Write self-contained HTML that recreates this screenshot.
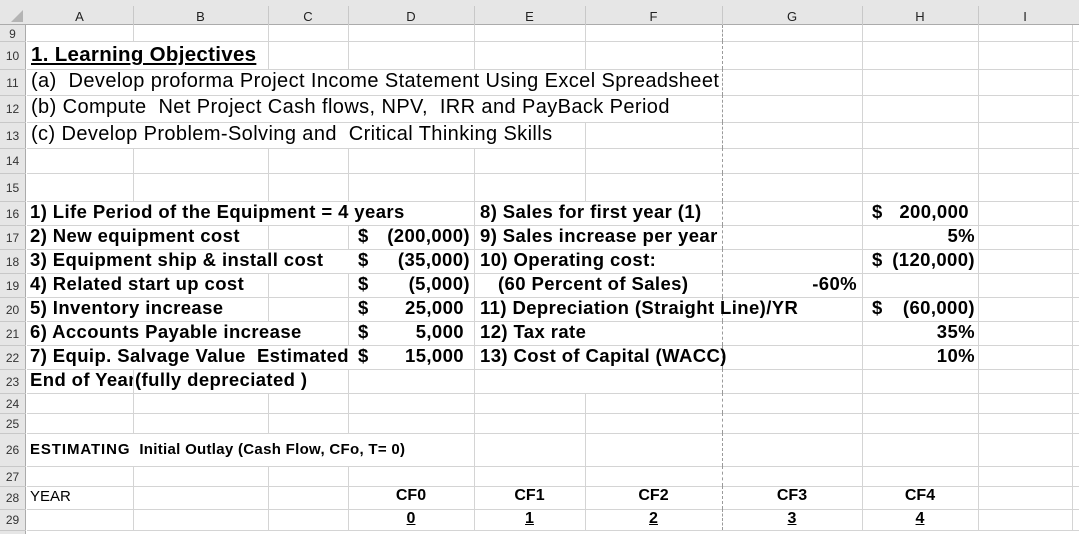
<!DOCTYPE html>
<html><head><meta charset="utf-8"><style>
*{margin:0;padding:0;box-sizing:border-box}
body{width:1079px;height:534px;overflow:hidden;background:#fff;font-family:"Liberation Sans",Arial,sans-serif;position:relative;color:#000}
.a{position:absolute;white-space:nowrap}
.h{background:#d4d4d4;position:absolute;height:1px}
.v{background:#d4d4d4;position:absolute;width:1px}
.dash{position:absolute;width:1px;border-left:1px dashed #9a9a9a}
.ch{position:absolute;top:8px;font-size:13px;color:#222;text-align:center;height:17px;line-height:17px}
.rn{position:absolute;left:0;width:25px;font-size:12px;color:#333;text-align:center}
.b{font-weight:bold}
.t19{font-size:20px;letter-spacing:0.4px}
.t17{font-size:18.5px;font-weight:bold;letter-spacing:0.4px;top:0}
</style></head><body>
<div style="position:absolute;left:0;top:0;width:1079px;height:25px;background:#e6e6e6;border-bottom:1px solid #ababab"></div>
<div style="position:absolute;left:0;top:25px;width:26px;height:509px;background:#e6e6e6;border-right:1px solid #ababab"></div>
<svg class="a" style="left:10px;top:9px" width="14" height="14"><polygon points="13,1 13,13 1,13" fill="#b4b4b4"/></svg>
<div id="g"></div>
<script>
var cols=[26,133,268,348,474,585,722,862,978,1072];
var rows=[25,41,69,95,122,148,173,201,225,249,273,297,321,345,369,393,413,433,466,486,509,530];
var names=["9","10","11","12","13","14","15","16","17","18","19","20","21","22","23","24","25","26","27","28","29"];
var omit={"10":[133],"11":[133,268,348,474,585],"12":[133,268,348,474,585],"13":[133,268,348,474],"16":[133,268,348,585],"17":[133,585],"18":[133,268,348,585],"19":[133,585],"20":[133,585],"21":[133,268,585],"22":[133,268,348,585],"23":[268,585],"26":[133,268,348]};
var h="";
var L=["A","B","C","D","E","F","G","H","I"];
for(var i=0;i<L.length;i++){h+='<div class="ch" style="left:'+cols[i]+'px;width:'+(cols[i+1]-cols[i])+'px">'+L[i]+'</div>';
if(i>0)h+='<div style="position:absolute;left:'+cols[i]+'px;top:6px;width:1px;height:19px;background:#c8c8c8"></div>';}
for(var r=0;r<names.length;r++){
var y0=rows[r],y1=rows[r+1];
h+='<div class="rn" style="top:'+y0+'px;height:'+(y1-y0)+'px;line-height:'+(y1-y0+2)+'px">'+names[r]+'</div>';
h+='<div class="h" style="left:27px;width:1052px;top:'+y1+'px"></div>';
h+='<div class="h" style="left:0;width:26px;top:'+y1+'px;background:#c8c8c8"></div>';
var om=omit[names[r]]||[];
for(var c=1;c<cols.length;c++){var x=cols[c];if(x==722){h+='<div class="dash" style="left:'+x+'px;top:'+y0+'px;height:'+(y1-y0)+'px"></div>';continue;}
if(om.indexOf(x)>=0)continue;
h+='<div class="v" style="left:'+x+'px;top:'+y0+'px;height:'+(y1-y0)+'px"></div>';}
}
document.getElementById("g").innerHTML=h;
</script>
<div class="a b" style="left:31px;top:43px;font-size:20.5px;letter-spacing:0.3px;text-decoration:underline">1. Learning Objectives</div>
<div class="a t19" style="left:31px;top:70px">(a)&nbsp; Develop proforma Project Income Statement Using Excel Spreadsheet</div>
<div class="a t19" style="left:31px;top:96px">(b) Compute&nbsp; Net Project Cash flows, NPV,&nbsp; IRR and PayBack Period</div>
<div class="a t19" style="left:31px;top:123px">(c) Develop Problem-Solving and&nbsp; Critical Thinking Skills</div>

<div class="a t17" style="left:30px;top:201px">1) Life Period of the Equipment = 4 years</div>
<div class="a t17" style="left:30px;top:225px">2) New equipment cost</div>
<div class="a t17" style="left:30px;top:249px">3) Equipment ship &amp; install cost</div>
<div class="a t17" style="left:30px;top:273px">4) Related start up cost</div>
<div class="a t17" style="left:30px;top:297px">5) Inventory increase</div>
<div class="a t17" style="left:30px;top:321px">6) Accounts Payable increase</div>
<div class="a t17" style="left:30px;top:345px">7) Equip. Salvage Value&nbsp; Estimated</div>
<div class="a t17" style="left:30px;top:369px;width:103px;overflow:hidden">End of Year</div>
<div class="a t17" style="left:135px;top:369px">(fully depreciated )</div>

<div class="a t17" style="left:358px;top:225px">$</div>
<div class="a t17" style="left:358px;top:249px">$</div>
<div class="a t17" style="left:358px;top:273px">$</div>
<div class="a t17" style="left:358px;top:297px">$</div>
<div class="a t17" style="left:358px;top:321px">$</div>
<div class="a t17" style="left:358px;top:345px">$</div>
<div class="a t17" style="right:609px;top:225px">(200,000)</div>
<div class="a t17" style="right:609px;top:249px">(35,000)</div>
<div class="a t17" style="right:609px;top:273px">(5,000)</div>
<div class="a t17" style="right:615px;top:297px">25,000</div>
<div class="a t17" style="right:615px;top:321px">5,000</div>
<div class="a t17" style="right:615px;top:345px">15,000</div>

<div class="a t17" style="left:480px;top:201px">8) Sales for first year (1)</div>
<div class="a t17" style="left:480px;top:225px">9) Sales increase per year</div>
<div class="a t17" style="left:480px;top:249px">10) Operating cost:</div>
<div class="a t17" style="left:498px;top:273px">(60 Percent of Sales)</div>
<div class="a t17" style="left:480px;top:297px">11) Depreciation (Straight Line)/YR</div>
<div class="a t17" style="left:480px;top:321px">12) Tax rate</div>
<div class="a t17" style="left:480px;top:345px">13) Cost of Capital (WACC)</div>
<div class="a t17" style="right:222px;top:273px">-60%</div>

<div class="a t17" style="left:872px;top:201px">$</div>
<div class="a t17" style="left:872px;top:249px">$</div>
<div class="a t17" style="left:872px;top:297px">$</div>
<div class="a t17" style="right:110px;top:201px">200,000</div>
<div class="a t17" style="right:104px;top:225px">5%</div>
<div class="a t17" style="right:104px;top:249px">(120,000)</div>
<div class="a t17" style="right:104px;top:297px">(60,000)</div>
<div class="a t17" style="right:104px;top:321px">35%</div>
<div class="a t17" style="right:104px;top:345px">10%</div>

<div class="a b" style="left:30px;top:441px;font-size:15px;letter-spacing:0.3px"><span style="letter-spacing:0.9px">ESTIMATING</span>&nbsp; Initial Outlay (Cash Flow, CFo, T= 0)</div>
<div class="a" style="left:30px;top:488px;font-size:15px">YEAR</div>
<div class="a b" style="left:348px;width:126px;text-align:center;top:487px;font-size:16px">CF0</div>
<div class="a b" style="left:474px;width:111px;text-align:center;top:487px;font-size:16px">CF1</div>
<div class="a b" style="left:585px;width:137px;text-align:center;top:487px;font-size:16px">CF2</div>
<div class="a b" style="left:722px;width:140px;text-align:center;top:487px;font-size:16px">CF3</div>
<div class="a b" style="left:862px;width:116px;text-align:center;top:487px;font-size:16px">CF4</div>
<div class="a b" style="left:348px;width:126px;text-align:center;top:510px;font-size:16px;text-decoration:underline">0</div>
<div class="a b" style="left:474px;width:111px;text-align:center;top:510px;font-size:16px;text-decoration:underline">1</div>
<div class="a b" style="left:585px;width:137px;text-align:center;top:510px;font-size:16px;text-decoration:underline">2</div>
<div class="a b" style="left:722px;width:140px;text-align:center;top:510px;font-size:16px;text-decoration:underline">3</div>
<div class="a b" style="left:862px;width:116px;text-align:center;top:510px;font-size:16px;text-decoration:underline">4</div>
</body></html>
